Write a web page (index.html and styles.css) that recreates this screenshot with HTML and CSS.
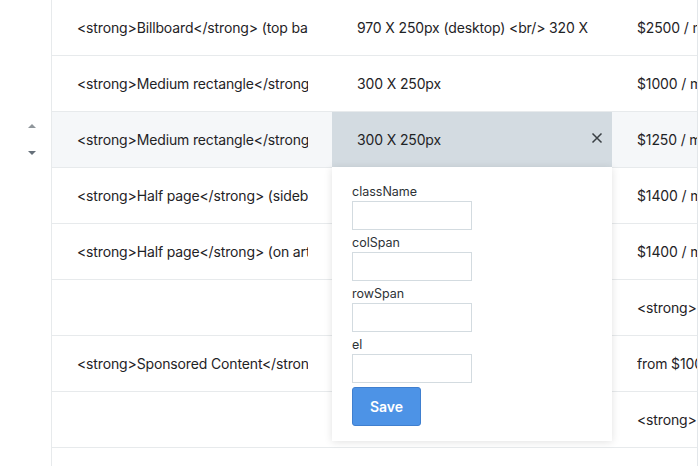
FILE: index.html
```html
<!DOCTYPE html>
<html>
<head>
<meta charset="utf-8">
<link rel="stylesheet" href="styles.css">
</head>
<body>
<div class="frame">
  <div class="gutter">
    <div class="sorter">
      <span class="tri up"></span>
      <span class="tri down"></span>
    </div>
  </div>
  <div class="table">
    <div class="row">
      <div class="cell"><span class="txt">&lt;strong&gt;Billboard&lt;/strong&gt; (top bar)</span></div>
      <div class="cell"><span class="txt">970 X 250px (desktop) &lt;br/&gt; 320 X 50px (mobile)</span></div>
      <div class="cell"><span class="txt">$2500 / month</span></div>
    </div>
    <div class="row">
      <div class="cell"><span class="txt">&lt;strong&gt;Medium rectangle&lt;/strong&gt; (sidebar)</span></div>
      <div class="cell"><span class="txt">300 X 250px</span></div>
      <div class="cell"><span class="txt">$1000 / month</span></div>
    </div>
    <div class="row active">
      <div class="cell"><span class="txt">&lt;strong&gt;Medium rectangle&lt;/strong&gt; (on article)</span></div>
      <div class="cell editing"><span class="txt">300 X 250px</span>
        <svg class="close" width="12" height="12" viewBox="0 0 12 12"><path d="M1.5 1.5 L10.5 10.5 M10.5 1.5 L1.5 10.5" stroke="#3a3f44" stroke-width="1.5" fill="none"/></svg>
      </div>
      <div class="cell"><span class="txt">$1250 / month</span></div>
    </div>
    <div class="row">
      <div class="cell"><span class="txt">&lt;strong&gt;Half page&lt;/strong&gt; (sidebar)</span></div>
      <div class="cell"><span class="txt">300 X 600px</span></div>
      <div class="cell"><span class="txt">$1400 / month</span></div>
    </div>
    <div class="row">
      <div class="cell"><span class="txt">&lt;strong&gt;Half page&lt;/strong&gt; (on article)</span></div>
      <div class="cell"><span class="txt">300 X 600px</span></div>
      <div class="cell"><span class="txt">$1400 / month</span></div>
    </div>
    <div class="row">
      <div class="cell"></div>
      <div class="cell"></div>
      <div class="cell"><span class="txt">&lt;strong&gt;Includes&lt;/strong&gt;</span></div>
    </div>
    <div class="row">
      <div class="cell"><span class="txt">&lt;strong&gt;Sponsored Content&lt;/strong&gt;</span></div>
      <div class="cell"></div>
      <div class="cell"><span class="txt">from $1000 / post</span></div>
    </div>
    <div class="row">
      <div class="cell"></div>
      <div class="cell"></div>
      <div class="cell"><span class="txt">&lt;strong&gt;Social&lt;/strong&gt;</span></div>
    </div>
    <div class="row">
      <div class="cell"></div>
      <div class="cell"></div>
      <div class="cell"></div>
    </div>

    <form class="popover">
      <label class="lbl">className</label>
      <input class="inp" type="text">
      <label class="lbl">colSpan</label>
      <input class="inp" type="text">
      <label class="lbl">rowSpan</label>
      <input class="inp" type="text">
      <label class="lbl">el</label>
      <input class="inp" type="text">
      <button class="save" type="button">Save</button>
    </form>
  </div>
</div>
</body>
</html>
```

FILE: styles.css
```css
html, body {
  margin: 0;
  padding: 0;
  background: #ffffff;
  overflow: hidden;
}
body {
  width: 698px;
  height: 466px;
  font-family: Inter, "Liberation Sans", Arial, sans-serif;
  color: #1f2326;
}
.frame {
  display: flex;
  width: 698px;
  height: 466px;
}
.gutter {
  width: 51px;
  flex: none;
  border-right: 1px solid #e7eaec;
}
.sorter {
  display: flex;
  flex-direction: column;
  align-items: flex-start;
  gap: 23px;
  padding: 124px 0 0 28px;
}
.tri {
  width: 0;
  height: 0;
  border-left: 4px solid transparent;
  border-right: 4px solid transparent;
}
.tri.up { border-bottom: 4px solid #8f969b; }
.tri.down { border-top: 4px solid #66707a; }
.table {
  position: relative;
  width: 645px;
  flex: none;
  border-right: 1px solid #e3e7ea;
  overflow: hidden;
}
.row {
  display: flex;
  height: 55px;
  border-bottom: 1px solid #e7eaec;
}
.row.active {
  background: #f5f7f9;
}
.cell {
  width: 280px;
  flex: none;
  box-sizing: border-box;
  padding: 0 24px 0 25px;
  display: flex;
  align-items: center;
  position: relative;
  font-size: 14px;
}
.txt {
  display: block;
  white-space: nowrap;
  overflow: hidden;
  max-width: 100%;
  letter-spacing: -0.14px;
}
.cell.editing {
  background: #d3dbe1;
}
.close {
  position: absolute;
  right: 9px;
  top: 20px;
}
.popover {
  position: absolute;
  left: 280px;
  top: 167px;
  width: 280px;
  box-sizing: border-box;
  background: #ffffff;
  box-shadow: 0 1px 8px rgba(0, 0, 0, 0.12);
  padding: 17px 20px 15px 20px;
  display: flex;
  flex-direction: column;
  align-items: flex-start;
  margin: 0;
}
.lbl {
  font-size: 12.5px;
  line-height: 16px;
  height: 16px;
  color: #2d3236;
  margin-bottom: 1px;
}
.inp {
  width: 120px;
  height: 29px;
  box-sizing: border-box;
  border: 1px solid #d3dbe0;
  border-radius: 0;
  margin: 0 0 5px 0;
  padding: 0 6px;
  font-size: 13px;
  background: #ffffff;
}
.save {
  width: 69px;
  height: 39px;
  box-sizing: border-box;
  background: #4d93e6;
  border: 1px solid #3f7fcf;
  border-radius: 3px;
  color: #ffffff;
  font-family: Inter, "Liberation Sans", Arial, sans-serif;
  font-weight: 600;
  font-size: 14px;
  padding: 0;
  margin: -1px 0 0 0;
}
```
